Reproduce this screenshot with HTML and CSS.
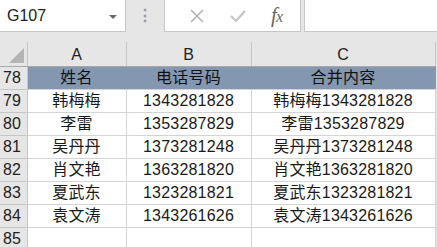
FILE: index.html
```html
<!DOCTYPE html>
<html lang="zh-CN">
<head>
  <meta charset="UTF-8" />
  <title>合并内容</title>
  <link rel="stylesheet" href="styles.css">
</head>
<body>
  <div class="toolbar">
    <div class="name-box">
      <span>G107</span>
      <span class="caret"></span>
    </div>
    <div class="grip">⋮</div>
    <div class="fx-buttons">
      <svg class="btn-icon" width="16" height="16" viewBox="0 0 16 16">
        <path d="M2 2 L14 14 M14 2 L2 14" stroke="#b4b4b4" stroke-width="1.6" fill="none"/>
      </svg>
      <svg class="btn-icon" width="18" height="16" viewBox="0 0 18 16">
        <path d="M2 8 L7 13 L16 3" stroke="#c4c4c4" stroke-width="2.2" fill="none"/>
      </svg>
      <span class="fx">f<i>x</i></span>
    </div>
    <div class="formula-input"></div>
  </div>

  <table class="sheet">
    <colgroup>
      <col class="col-rh"><col class="col-a"><col class="col-b"><col class="col-c"><col class="col-rest">
    </colgroup>
    <thead>
      <tr>
        <th class="corner"><span class="tri"></span></th>
        <th>A</th><th>B</th><th>C</th><th class="rest"></th>
      </tr>
    </thead>
    <tbody id="rows">
      <tr class="title-row">
        <td class="rh">78</td><td>姓名</td><td>电话号码</td><td>合并内容</td><td class="rest"></td>
      </tr>
    </tbody>
  </table>

  <script>
    const people = [
      ['韩梅梅', '1343281828'],
      ['李雷', '1353287829'],
      ['吴丹丹', '1373281248'],
      ['肖文艳', '1363281820'],
      ['夏武东', '1323281821'],
      ['袁文涛', '1343261626']
    ];
    const body = document.getElementById('rows');
    people.forEach((p, i) => {
      const tr = document.createElement('tr');
      tr.innerHTML = `<td class="rh">${79 + i}</td><td>${p[0]}</td><td>${p[1]}</td><td>${p[0]}${p[1]}</td><td class="rest"></td>`;
      body.appendChild(tr);
    });
    const last = document.createElement('tr');
    last.innerHTML = '<td class="rh">85</td><td></td><td></td><td></td><td class="rest"></td>';
    body.appendChild(last);
  </script>
</body>
</html>
```

FILE: styles.css
```css
* { box-sizing: border-box; margin: 0; padding: 0; }
body { width: 437px; height: 247px; overflow: hidden; background: #fff; font-family: "Liberation Sans", "Noto Sans CJK SC", sans-serif; color: #1a1a1a; }

/* formula bar */
.toolbar { display: flex; align-items: flex-start; height: 42px; background: #e6e6e6; }
.name-box { width: 126px; height: 32px; background: #fff; border-right: 1px solid #c6c6c6; border-bottom: 1px solid #c6c6c6; display: flex; align-items: center; justify-content: space-between; padding: 0 8px 0 7px; font-size: 16px; color: #222; }
.caret { width: 0; height: 0; border-left: 4px solid transparent; border-right: 4px solid transparent; border-top: 4px solid #666; margin-top: 2px; }
.grip { width: 38px; text-align: center; color: #9a9a9a; font-size: 16px; line-height: 32px; font-weight: bold; }
.fx-buttons { width: 137px; height: 32px; background: #fff; border: 1px solid #c6c6c6; border-top: none; display: flex; align-items: center; justify-content: space-around; padding: 0 6px 0 12px; }
.fx { font-family: "Liberation Serif", serif; font-style: italic; font-size: 21px; color: #666; letter-spacing: -1px; }
.fx i { font-size: 16px; }
.formula-input { flex: 1; height: 32px; margin-left: 3px; background: #fff; border-left: 1px solid #c6c6c6; border-bottom: 1px solid #c6c6c6; }

/* grid */
.sheet { border-collapse: collapse; table-layout: fixed; width: 437px; font-size: 16px; line-height: 20px; }
.col-rh { width: 27px; }
.col-a { width: 99px; }
.col-b { width: 125px; }
.col-c { width: 184px; }
.col-rest { width: 2px; }
.sheet tr { height: 23px; }
.sheet thead tr { height: 24px; }
.sheet th { background: #e6e6e6; font-weight: normal; color: #222; border-right: 1px solid #c6c6c6; border-bottom: 1px solid #a8a8a8; padding: 2px 0 0; }
.sheet th.corner { position: relative; }
.tri { position: absolute; right: 3px; bottom: 3px; width: 0; height: 0; border-left: 15px solid transparent; border-bottom: 15px solid #b4b4b4; }
.sheet td { text-align: center; border-right: 1px solid #d4d4d4; border-bottom: 1px solid #d4d4d4; white-space: nowrap; overflow: hidden; padding: 1px 0 0; letter-spacing: 0.2px; }
.sheet td.rh { background: #e6e6e6; border-right: 1px solid #c6c6c6; border-bottom: 1px solid #c6c6c6; text-align: left; padding-left: 3px; color: #222; letter-spacing: 0; }
.sheet td.rest, .sheet th.rest { background: #e6e6e6; border: none; }
.title-row td { background: #8497b0; color: #111; border-right-color: #8497b0; }
.title-row td.rh { background: #e6e6e6; }
```
